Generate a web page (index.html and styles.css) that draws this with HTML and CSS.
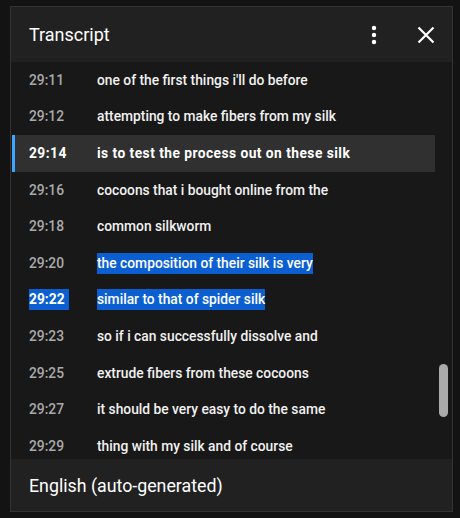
FILE: index.html
```html
<!DOCTYPE html>
<html>
<head>
<meta charset="utf-8">
<link rel="stylesheet" href="styles.css">
</head>
<body>
<div class="panel">
  <div class="header">
    <div class="title">Transcript</div>
    <div class="actions">
      <svg class="icon" width="24" height="24" viewBox="0 0 24 24"><circle cx="12" cy="5" r="2.2" fill="#fff"/><circle cx="12" cy="12" r="2.2" fill="#fff"/><circle cx="12" cy="19" r="2.2" fill="#fff"/></svg>
      <svg class="icon close" width="24" height="24" viewBox="0 0 24 24"><path d="M4.5 4.5 L19.5 19.5 M19.5 4.5 L4.5 19.5" stroke="#fff" stroke-width="2.2" fill="none"/></svg>
    </div>
  </div>
  <div class="list">
    <div class="rows">
      <div class="row"><span class="ts">29:11</span><span class="txt">one of the first things i'll do before</span></div>
      <div class="row"><span class="ts">29:12</span><span class="txt">attempting to make fibers from my silk</span></div>
      <div class="row active"><span class="ts">29:14</span><span class="txt">is to test the process out on these silk</span></div>
      <div class="row"><span class="ts">29:16</span><span class="txt">cocoons that i bought online from the</span></div>
      <div class="row"><span class="ts">29:18</span><span class="txt">common silkworm</span></div>
      <div class="row"><span class="ts">29:20</span><span class="txt"><span class="sel">the composition of their silk is very</span></span></div>
      <div class="row"><span class="ts"><span class="sel sel-ts">29:22</span></span><span class="txt"><span class="sel">similar to that of spider silk</span></span></div>
      <div class="row"><span class="ts">29:23</span><span class="txt">so if i can successfully dissolve and</span></div>
      <div class="row"><span class="ts">29:25</span><span class="txt">extrude fibers from these cocoons</span></div>
      <div class="row"><span class="ts">29:27</span><span class="txt">it should be very easy to do the same</span></div>
      <div class="row"><span class="ts">29:29</span><span class="txt">thing with my silk and of course</span></div>
    </div>
    <div class="scrollbar"></div>
  </div>
  <div class="footer">English (auto-generated)</div>
</div>
</body>
</html>
```

FILE: styles.css
```css
html, body {
  margin: 0;
  padding: 0;
  background: #131313;
  height: 100%;
}
body {
  font-family: Roboto, "Noto Sans", "Liberation Sans", sans-serif;
  color: #f1f1f1;
  padding: 6px 7px 6px 10px;
  box-sizing: border-box;
}
.panel {
  width: 443px;
  height: 506px;
  border: 1px solid #333;
  display: flex;
  flex-direction: column;
  box-sizing: border-box;
  background: #181818;
  overflow: hidden;
}
.header {
  height: 55px;
  flex: none;
  background: #212121;
  display: flex;
  align-items: center;
  justify-content: space-between;
  padding: 0 14px 0 18px;
}
.title {
  font-size: 18px;
  font-weight: 400;
  color: #fff;
  padding-bottom: 1px;
}
.actions {
  display: flex;
  align-items: center;
  gap: 28px;
}
.icon { display: block; }
.list {
  flex: 1;
  position: relative;
  overflow: hidden;
}
.rows {
  display: flex;
  flex-direction: column;
  padding-left: 1px;
  width: 423px;
}
.row {
  height: 36.6px;
  flex: none;
  display: flex;
  align-items: center;
  font-size: 13.8px;
  font-weight: 500;
  box-sizing: border-box;
  border-left: 3px solid transparent;
  padding-bottom: 1px;
}
.row .ts {
  width: 68px;
  padding-left: 14px;
  color: #aaa;
  flex: none;
}
.row .txt {
  color: #f1f1f1;
}
.row.active {
  background: #303030;
  border-left-color: #3ea6ff;
}
.row.active .ts, .row.active .txt {
  color: #fff;
  font-weight: 700;
  letter-spacing: 0.45px;
}
.sel {
  background: #0b5fd1;
  color: #fff;
  padding: 2px 0 3px;
}
.sel-ts {
  font-weight: 700;
  padding-right: 4px;
}
.scrollbar {
  position: absolute;
  left: 428px;
  top: 302px;
  width: 9px;
  height: 53px;
  border-radius: 5px;
  background: #aaa;
}
.footer {
  height: 52px;
  flex: none;
  background: #212121;
  display: flex;
  align-items: center;
  padding-left: 18px;
  font-size: 17.8px;
  color: #fff;
}
```
